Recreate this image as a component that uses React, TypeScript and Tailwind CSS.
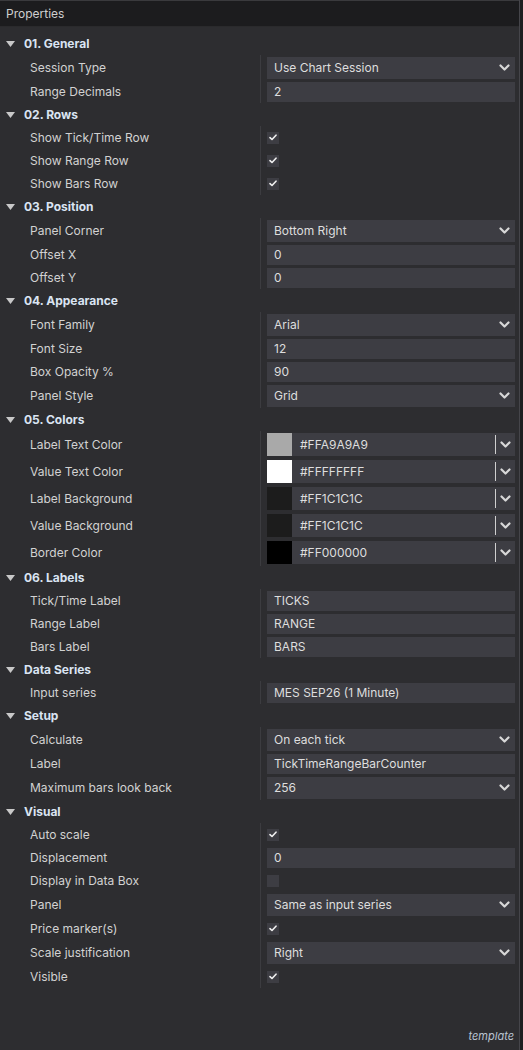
import React from "react";

type Row =
  | { kind: "select"; label: string; value: string }
  | { kind: "input"; label: string; value: string }
  | { kind: "check"; label: string; checked: boolean }
  | { kind: "color"; label: string; value: string; swatch: string };

type Group = { title: string; rows: Row[] };

const groups: Group[] = [
  {
    title: "01. General",
    rows: [
      { kind: "select", label: "Session Type", value: "Use Chart Session" },
      { kind: "input", label: "Range Decimals", value: "2" },
    ],
  },
  {
    title: "02. Rows",
    rows: [
      { kind: "check", label: "Show Tick/Time Row", checked: true },
      { kind: "check", label: "Show Range Row", checked: true },
      { kind: "check", label: "Show Bars Row", checked: true },
    ],
  },
  {
    title: "03. Position",
    rows: [
      { kind: "select", label: "Panel Corner", value: "Bottom Right" },
      { kind: "input", label: "Offset X", value: "0" },
      { kind: "input", label: "Offset Y", value: "0" },
    ],
  },
  {
    title: "04. Appearance",
    rows: [
      { kind: "select", label: "Font Family", value: "Arial" },
      { kind: "input", label: "Font Size", value: "12" },
      { kind: "input", label: "Box Opacity %", value: "90" },
      { kind: "select", label: "Panel Style", value: "Grid" },
    ],
  },
  {
    title: "05. Colors",
    rows: [
      { kind: "color", label: "Label Text Color", value: "#FFA9A9A9", swatch: "#a9a9a9" },
      { kind: "color", label: "Value Text Color", value: "#FFFFFFFF", swatch: "#ffffff" },
      { kind: "color", label: "Label Background", value: "#FF1C1C1C", swatch: "#1c1c1c" },
      { kind: "color", label: "Value Background", value: "#FF1C1C1C", swatch: "#1c1c1c" },
      { kind: "color", label: "Border Color", value: "#FF000000", swatch: "#000000" },
    ],
  },
  {
    title: "06. Labels",
    rows: [
      { kind: "input", label: "Tick/Time Label", value: "TICKS" },
      { kind: "input", label: "Range Label", value: "RANGE" },
      { kind: "input", label: "Bars Label", value: "BARS" },
    ],
  },
  {
    title: "Data Series",
    rows: [{ kind: "input", label: "Input series", value: "MES SEP26 (1 Minute)" }],
  },
  {
    title: "Setup",
    rows: [
      { kind: "select", label: "Calculate", value: "On each tick" },
      { kind: "input", label: "Label", value: "TickTimeRangeBarCounter" },
      { kind: "select", label: "Maximum bars look back", value: "256" },
    ],
  },
  {
    title: "Visual",
    rows: [
      { kind: "check", label: "Auto scale", checked: true },
      { kind: "input", label: "Displacement", value: "0" },
      { kind: "check", label: "Display in Data Box", checked: false },
      { kind: "select", label: "Panel", value: "Same as input series" },
      { kind: "check", label: "Price marker(s)", checked: true },
      { kind: "select", label: "Scale justification", value: "Right" },
      { kind: "check", label: "Visible", checked: true },
    ],
  },
];

function Chevron() {
  return (
    <svg width="11" height="8" viewBox="0 0 11 8" className="shrink-0">
      <path d="M1.5 1.5 L5.5 5.5 L9.5 1.5" fill="none" stroke="#d8d8d8" strokeWidth="2.2" strokeLinecap="round" strokeLinejoin="round" />
    </svg>
  );
}

function Check() {
  return (
    <svg width="8" height="7" viewBox="0 0 8 7">
      <path d="M1 3.6 L3 5.5 L7 1.2" fill="none" stroke="#f0f0f0" strokeWidth="1.6" strokeLinecap="round" strokeLinejoin="round" />
    </svg>
  );
}

function Value({ row }: { row: Row }) {
  if (row.kind === "select") {
    return (
      <div className="flex h-[22px] w-full items-center justify-between bg-[#3d3d43] pl-[7px] pr-[5px] text-[12px] text-[#dedede]">
        <span>{row.value}</span>
        <Chevron />
      </div>
    );
  }
  if (row.kind === "input") {
    return (
      <div className="flex h-[20px] w-full items-center bg-[#3d3d43] pl-[7px] text-[12px] text-[#dedede]">
        {row.value}
      </div>
    );
  }
  if (row.kind === "check") {
    return (
      <div className="flex h-[12px] w-[12px] items-center justify-center bg-[#3d3d43]">
        {row.checked ? <Check /> : null}
      </div>
    );
  }
  return (
    <div className="flex h-[23px] w-full items-center bg-[#3d3d43] text-[12px] text-[#dedede]">
      <div className="h-full w-[25px] shrink-0" style={{ backgroundColor: row.swatch }} />
      <span className="ml-[8px] flex-1">{row.value}</span>
      <div className="h-[19px] w-px bg-[#cfcfcf]" />
      <div className="flex w-[19px] items-center justify-center">
        <Chevron />
      </div>
    </div>
  );
}

function rowHeight(row: Row) {
  switch (row.kind) {
    case "select":
      return "h-[25px]";
    case "input":
      return "h-[23px]";
    case "check":
      return "h-[23px]";
    default:
      return "h-[27px]";
  }
}

export default function App() {
  return (
    <div
      className="flex h-[1050px] w-[523px] bg-[#1e1e20]"
      style={{ fontFamily: "Inter, 'Noto Sans', sans-serif" }}
    >
      <div className="flex h-full w-[520px] flex-col border-r border-[#45454a] bg-[#2d2d30]">
        <div className="flex h-[27px] items-center border-t border-[#3a3a3d] border-b border-b-[#2a2a2c] bg-[#1c1c1e] pl-[6px] text-[12px] text-[#cfcfcf]">
          Properties
        </div>
        <div className="flex flex-1 flex-col pt-[5px]">
          {groups.map((g) => (
            <div key={g.title} className="flex flex-col">
              <div className="flex h-[23px] items-center">
                <svg width="9" height="6" viewBox="0 0 9 6" className="ml-[6px] mr-[9px]">
                  <path d="M0 0 L9 0 L4.5 6 Z" fill="#c8c8c8" />
                </svg>
                <span className="text-[12px] font-bold text-[#dae4f2]">{g.title}</span>
              </div>
              {g.rows.map((r) => (
                <div key={r.label} className={`flex ${rowHeight(r)} items-stretch`}>
                  <div className="flex w-[261px] shrink-0 items-center border-r border-[#3c3c40] pl-[30px] text-[12px] text-[#d2d2d2]">
                    {r.label}
                  </div>
                  <div className="flex flex-1 items-center pl-[6px] pr-[4px]">
                    <Value row={r} />
                  </div>
                </div>
              ))}
            </div>
          ))}
          <div className="flex-1" />
          <div className="flex justify-end pb-[6px] pr-[5px] text-[11px] italic text-[#b9c3d0]">template</div>
        </div>
      </div>
    </div>
  );
}
